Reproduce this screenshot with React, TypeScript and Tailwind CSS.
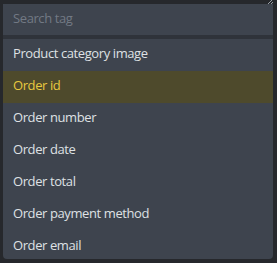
const tags = [
  "Product category image",
  "Order id",
  "Order number",
  "Order date",
  "Order total",
  "Order payment method",
  "Order email",
];

export default function App() {
  const active = 1;
  return (
    <div
      className="relative h-[263px] w-[277px] overflow-hidden bg-[#26282c] pl-[3px] pt-[4px]"
      style={{ fontFamily: '"Open Sans", "Noto Sans", sans-serif' }}
    >
      {/* resize handle remnant from the field above */}
      <svg className="absolute right-[4px] top-0" width="7" height="4" viewBox="0 0 7 4">
        <path d="M2 4 L6 0 M5 4 L7 2" stroke="#9aa0a8" strokeWidth="1" />
      </svg>
      <div className="flex h-[255px] w-[270px] flex-col overflow-hidden rounded-b-[4px] bg-[#3e444e]">
        <div className="flex h-[31px] shrink-0 items-center px-[10px] pb-[1px]">
          <input
            placeholder="Search tag"
            className="w-full bg-transparent text-[13px] tracking-[-0.4px] text-[#e2e4e7] outline-none placeholder:text-[#727984]"
          />
        </div>
        <div className="h-[4px] shrink-0 bg-[#2f333a]" />
        <ul className="flex flex-col">
          {tags.map((t, i) => (
            <li
              key={t}
              className={
                i === active
                  ? "flex h-[32px] shrink-0 items-center bg-[#4e4a2c] px-[10px] pb-[2px] text-[13px] tracking-[-0.4px] text-[#e8c93f]"
                  : "flex h-[32px] shrink-0 items-center px-[10px] pb-[2px] text-[13px] tracking-[-0.4px] text-[#dfe1e4]"
              }
            >
              {t}
            </li>
          ))}
        </ul>
      </div>
    </div>
  );
}
